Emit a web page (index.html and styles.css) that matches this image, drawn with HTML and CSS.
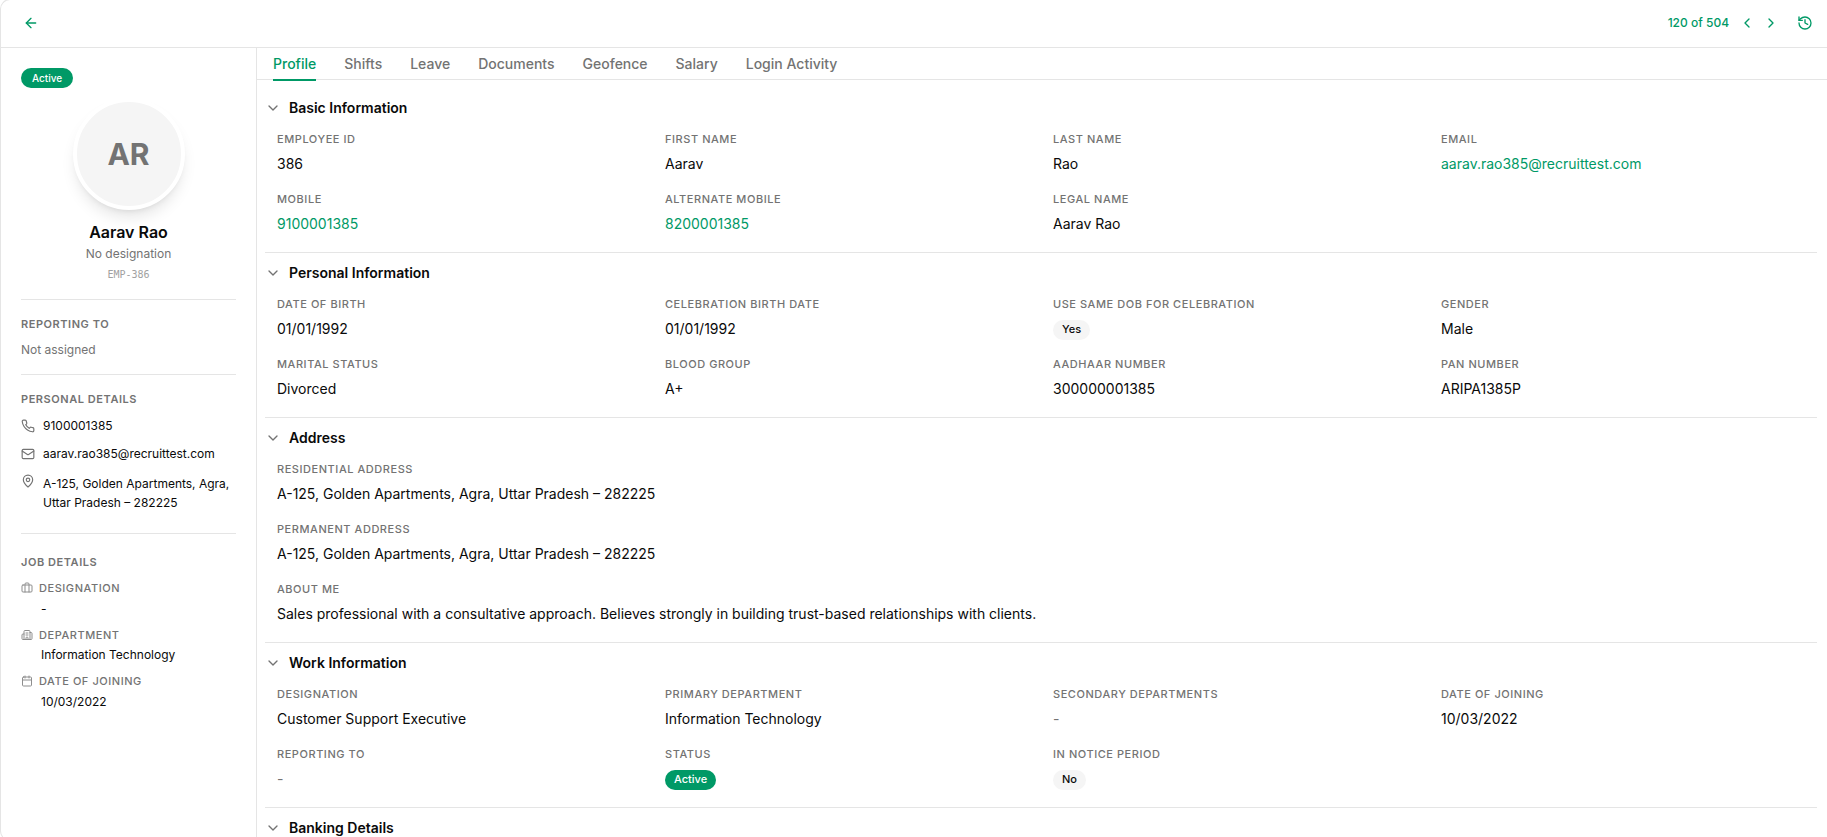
FILE: index.html
```
<!DOCTYPE html>
<html lang="en">
<head>
    <meta charset="UTF-8">
    <meta name="viewport" content="width=device-width, initial-scale=1.0">
    <title>Aarav Rao - Employee Profile</title>
    <link rel="stylesheet" href="styles.css">
</head>
<body>
    <div class="panel">
        <header class="topbar">
            <a href="#" class="icon-link" aria-label="Back">
                <svg class="icon icon-16" viewBox="0 0 24 24"><path d="m12 19-7-7 7-7"/><path d="M19 12H5"/></svg>
            </a>
            <div class="pager">
                <span class="pager-count">120 of 504</span>
                <a href="#" class="icon-link pager-prev" aria-label="Previous">
                    <svg class="icon icon-16" viewBox="0 0 24 24"><path d="m15 18-6-6 6-6"/></svg>
                </a>
                <a href="#" class="icon-link pager-next" aria-label="Next">
                    <svg class="icon icon-16" viewBox="0 0 24 24"><path d="m9 18 6-6-6-6"/></svg>
                </a>
                <a href="#" class="icon-link" aria-label="History">
                    <svg class="icon icon-16" viewBox="0 0 24 24"><path d="M3 12a9 9 0 1 0 9-9 9.75 9.75 0 0 0-6.74 2.74L3 8"/><path d="M3 3v5h5"/><path d="M12 7v5l4 2"/></svg>
                </a>
            </div>
        </header>

        <div class="layout">
            <aside class="sidebar">
                <span class="badge badge-active badge-top">Active</span>
                <div class="person">
                    <div class="avatar">AR</div>
                    <h1>Aarav Rao</h1>
                    <p class="person-role">No designation</p>
                    <p class="person-code">EMP-386</p>
                </div>

                <div class="side-block">
                    <h2>Reporting To</h2>
                    <p class="side-empty">Not assigned</p>
                </div>

                <div class="side-block">
                    <h2>Personal Details</h2>
                    <ul class="contact">
                        <li>
                            <svg class="icon icon-14" viewBox="0 0 24 24"><path d="M22 16.92v3a2 2 0 0 1-2.18 2 19.79 19.79 0 0 1-8.63-3.07 19.5 19.5 0 0 1-6-6 19.79 19.79 0 0 1-3.07-8.67A2 2 0 0 1 4.11 2h3a2 2 0 0 1 2 1.72 12.84 12.84 0 0 0 .7 2.81 2 2 0 0 1-.45 2.11L8.09 9.91a16 16 0 0 0 6 6l1.27-1.27a2 2 0 0 1 2.11-.45 12.84 12.84 0 0 0 2.81.7A2 2 0 0 1 22 16.92z"/></svg>
                            <span>9100001385</span>
                        </li>
                        <li>
                            <svg class="icon icon-14" viewBox="0 0 24 24"><rect width="20" height="16" x="2" y="4" rx="2"/><path d="m22 7-8.97 5.7a1.94 1.94 0 0 1-2.06 0L2 7"/></svg>
                            <span>aarav.rao385@recruittest.com</span>
                        </li>
                        <li class="contact-address">
                            <svg class="icon icon-14" viewBox="0 0 24 24"><path d="M20 10c0 4.993-5.539 10.193-7.399 11.799a1 1 0 0 1-1.202 0C9.539 20.193 4 14.993 4 10a8 8 0 0 1 16 0"/><circle cx="12" cy="10" r="3"/></svg>
                            <span>A-125, Golden Apartments, Agra, Uttar Pradesh – 282225</span>
                        </li>
                    </ul>
                </div>

                <div class="side-block side-job">
                    <h2>Job Details</h2>
                    <dl class="job">
                        <dt>
                            <svg class="icon icon-12" viewBox="0 0 24 24"><path d="M16 20V4a2 2 0 0 0-2-2h-4a2 2 0 0 0-2 2v16"/><rect width="20" height="14" x="2" y="6" rx="2"/></svg>
                            Designation
                        </dt>
                        <dd>-</dd>
                        <dt>
                            <svg class="icon icon-12" viewBox="0 0 24 24"><path d="M10 12h4"/><path d="M10 8h4"/><path d="M14 21v-3a2 2 0 0 0-4 0v3"/><path d="M6 10H4a2 2 0 0 0-2 2v7a2 2 0 0 0 2 2h16a2 2 0 0 0 2-2V9a2 2 0 0 0-2-2h-2"/><path d="M6 21V5a2 2 0 0 1 2-2h8a2 2 0 0 1 2 2v16"/></svg>
                            Department
                        </dt>
                        <dd>Information Technology</dd>
                        <dt>
                            <svg class="icon icon-12" viewBox="0 0 24 24"><path d="M8 2v4"/><path d="M16 2v4"/><rect width="18" height="18" x="3" y="4" rx="2"/><path d="M3 10h18"/></svg>
                            Date of Joining
                        </dt>
                        <dd>10/03/2022</dd>
                    </dl>
                </div>
            </aside>

            <main class="content">
                <nav class="tabs">
                    <a href="#" class="active">Profile</a>
                    <a href="#">Shifts</a>
                    <a href="#">Leave</a>
                    <a href="#">Documents</a>
                    <a href="#">Geofence</a>
                    <a href="#">Salary</a>
                    <a href="#">Login Activity</a>
                </nav>

                <div class="sections">
                    <section class="section">
                        <h3><svg class="icon icon-16" viewBox="0 0 24 24"><path d="m6 9 6 6 6-6"/></svg>Basic Information</h3>
                        <div class="fields">
                            <div class="field"><label>Employee ID</label><p>386</p></div>
                            <div class="field"><label>First Name</label><p>Aarav</p></div>
                            <div class="field"><label>Last Name</label><p>Rao</p></div>
                            <div class="field"><label>Email</label><p><a href="#">aarav.rao385@recruittest.com</a></p></div>
                            <div class="field"><label>Mobile</label><p><a href="#">9100001385</a></p></div>
                            <div class="field"><label>Alternate Mobile</label><p><a href="#">8200001385</a></p></div>
                            <div class="field"><label>Legal Name</label><p>Aarav Rao</p></div>
                        </div>
                    </section>

                    <section class="section">
                        <h3><svg class="icon icon-16" viewBox="0 0 24 24"><path d="m6 9 6 6 6-6"/></svg>Personal Information</h3>
                        <div class="fields">
                            <div class="field"><label>Date of Birth</label><p>01/01/1992</p></div>
                            <div class="field"><label>Celebration Birth Date</label><p>01/01/1992</p></div>
                            <div class="field"><label>Use same DOB for celebration</label><p><span class="badge">Yes</span></p></div>
                            <div class="field"><label>Gender</label><p>Male</p></div>
                            <div class="field"><label>Marital Status</label><p>Divorced</p></div>
                            <div class="field"><label>Blood Group</label><p>A+</p></div>
                            <div class="field"><label>Aadhaar Number</label><p>300000001385</p></div>
                            <div class="field"><label>PAN Number</label><p>ARIPA1385P</p></div>
                        </div>
                    </section>

                    <section class="section">
                        <h3><svg class="icon icon-16" viewBox="0 0 24 24"><path d="m6 9 6 6 6-6"/></svg>Address</h3>
                        <div class="fields fields-single">
                            <div class="field"><label>Residential Address</label><p>A-125, Golden Apartments, Agra, Uttar Pradesh – 282225</p></div>
                            <div class="field"><label>Permanent Address</label><p>A-125, Golden Apartments, Agra, Uttar Pradesh – 282225</p></div>
                            <div class="field"><label>About Me</label><p>Sales professional with a consultative approach. Believes strongly in building trust-based relationships with clients.</p></div>
                        </div>
                    </section>

                    <section class="section">
                        <h3><svg class="icon icon-16" viewBox="0 0 24 24"><path d="m6 9 6 6 6-6"/></svg>Work Information</h3>
                        <div class="fields">
                            <div class="field"><label>Designation</label><p>Customer Support Executive</p></div>
                            <div class="field"><label>Primary Department</label><p>Information Technology</p></div>
                            <div class="field"><label>Secondary Departments</label><p class="empty">-</p></div>
                            <div class="field"><label>Date of Joining</label><p>10/03/2022</p></div>
                            <div class="field"><label>Reporting To</label><p class="empty">-</p></div>
                            <div class="field"><label>Status</label><p><span class="badge badge-active">Active</span></p></div>
                            <div class="field"><label>In Notice Period</label><p><span class="badge">No</span></p></div>
                        </div>
                    </section>

                    <section class="section">
                        <h3><svg class="icon icon-16" viewBox="0 0 24 24"><path d="m6 9 6 6 6-6"/></svg>Banking Details</h3>
                    </section>
                </div>
            </main>
        </div>
    </div>
</body>
</html>
```
FILE: styles.css
```
* {
    box-sizing: border-box;
}
body {
    font-family: 'Inter', sans-serif;
    font-size: 14px;
    line-height: 20px;
    color: #0a0a0a;
    background-color: #fff;
    margin: 0;
    height: 100vh;
    overflow: hidden;
}
h1, h2, h3, p, ul, dl, dd {
    margin: 0;
    padding: 0;
}
a {
    color: #009966;
    text-decoration: none;
}
.icon {
    display: block;
    flex-shrink: 0;
    fill: none;
    stroke: currentColor;
    stroke-width: 2;
    stroke-linecap: round;
    stroke-linejoin: round;
}
.icon-16 {
    width: 16px;
    height: 16px;
}
.icon-14 {
    width: 14px;
    height: 14px;
}
.icon-12 {
    width: 12px;
    height: 12px;
}
.panel {
    display: flex;
    flex-direction: column;
    height: 842px;
    margin-top: -1px;
    border: 1px solid #e5e5e5;
    border-right: 0;
    border-radius: 10px 0 0 10px;
    overflow: hidden;
}

/* top bar */
.topbar {
    display: flex;
    align-items: center;
    justify-content: space-between;
    height: 48px;
    flex-shrink: 0;
    padding: 0 14px 2px 22px;
    border-bottom: 1px solid #e5e5e5;
}
.pager {
    display: flex;
    align-items: center;
}
.pager-count {
    font-size: 12px;
    font-weight: 500;
    color: #009966;
    margin-right: 10px;
}
.pager-prev {
    margin-right: 8px;
}
.pager-next {
    margin-right: 18px;
}

.layout {
    display: flex;
    flex: 1;
    min-height: 0;
}

/* sidebar */
.sidebar {
    width: 256px;
    flex-shrink: 0;
    padding: 20px;
    border-right: 1px solid #e5e5e5;
}
.badge {
    display: inline-block;
    height: 20px;
    margin-top: 1px;
    padding: 0 9px;
    border-radius: 10px;
    background-color: #f5f5f5;
    font-size: 11px;
    font-weight: 500;
    line-height: 19px;
    vertical-align: top;
}
.badge-active {
    background-color: #009966;
    color: #fff;
}
.badge-top {
    margin-top: 0;
    padding: 0 11px;
    font-size: 10px;
    line-height: 20px;
}
.person {
    display: flex;
    flex-direction: column;
    align-items: center;
    padding-bottom: 17px;
}
.avatar {
    width: 112px;
    height: 112px;
    margin-top: 10px;
    border: 4px solid #fff;
    border-radius: 50%;
    background-color: #f5f5f5;
    box-shadow: 0 10px 15px -3px rgba(0, 0, 0, 0.1), 0 4px 6px -4px rgba(0, 0, 0, 0.1);
    color: #737373;
    font-size: 30px;
    font-weight: 700;
    line-height: 104px;
    text-align: center;
}
.person h1 {
    margin-top: 12px;
    font-size: 16px;
    font-weight: 600;
    line-height: 20px;
}
.person-role {
    margin-top: 4px;
    font-size: 12px;
    line-height: 16px;
    color: #737373;
}
.person-code {
    margin-top: 5px;
    font-family: 'DejaVu Sans Mono', monospace;
    font-size: 10px;
    line-height: 15px;
    color: #a1a1a1;
}
.side-block {
    border-top: 1px solid #e5e5e5;
    padding: 16px 0;
}
.side-block h2 {
    font-size: 11px;
    font-weight: 600;
    line-height: 16px;
    letter-spacing: 0.55px;
    text-transform: uppercase;
    color: #737373;
}
.side-empty {
    margin-top: 10px;
    font-size: 12px;
    line-height: 16px;
    color: #737373;
}
.contact {
    list-style: none;
    padding-top: 1px;
    font-size: 12px;
}
.contact li {
    display: flex;
    align-items: center;
    gap: 8px;
    height: 20px;
    margin-top: 8px;
}
.contact .icon {
    color: #737373;
}
.contact .contact-address {
    align-items: flex-start;
    height: 43px;
    margin-top: 10px;
    line-height: 19px;
}

/* job details */
.side-job {
    padding-top: 20px;
}
.job dt {
    display: flex;
    align-items: center;
    gap: 6px;
    font-size: 11px;
    font-weight: 500;
    line-height: 16px;
    letter-spacing: 0.55px;
    text-transform: uppercase;
    color: #737373;
    margin-top: 10px;
}
.job .icon {
    opacity: 0.8;
}
.job dd {
    font-size: 12px;
    line-height: 16px;
    margin-top: 4.5px;
    padding-left: 20px;
}

/* tabs */
.content {
    flex: 1;
    min-width: 0;
}
.tabs {
    display: flex;
    gap: 28px;
    height: 32px;
    padding-left: 16px;
    border-bottom: 1px solid #e5e5e5;
}
.tabs a {
    height: 33px;
    padding-top: 6px;
    font-weight: 500;
    color: #737373;
}
.tabs .active {
    color: #009966;
    border-bottom: 2px solid #009966;
}

/* profile sections */
.sections {
    padding: 8px 10px 0 8px;
}
.section {
    border-bottom: 1px solid #e5e5e5;
}
.section h3 {
    display: flex;
    align-items: center;
    gap: 8px;
    height: 40px;
    font-size: 14px;
    font-weight: 600;
}
.section h3 .icon {
    color: #737373;
}
.fields {
    display: grid;
    grid-template-columns: repeat(4, 1fr);
    gap: 16px 24px;
    padding: 3px 12px 17px;
}
.fields-single {
    grid-template-columns: 1fr;
}
.field label {
    display: block;
    font-size: 11px;
    font-weight: 500;
    line-height: 16px;
    letter-spacing: 0.55px;
    text-transform: uppercase;
    color: #737373;
}
.field p {
    height: 21px;
    margin-top: 7px;
}
.field .empty {
    color: #737373;
}
```
